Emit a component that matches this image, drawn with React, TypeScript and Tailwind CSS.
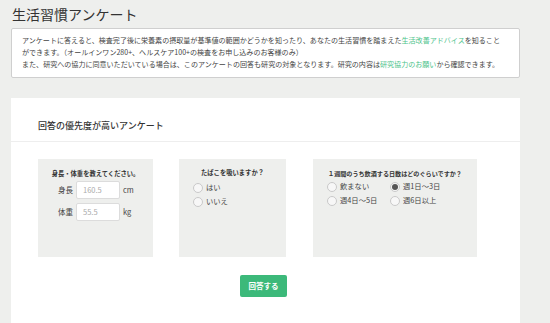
import React from "react";

function Radio({ label, checked }: { label: string; checked?: boolean }) {
  return (
    <div className="flex items-center h-[14px]">
      <span className="w-[10px] h-[10px] rounded-full border border-[#c9c9c9] bg-[#f7f7f7] flex items-center justify-center shrink-0">
        {checked && <span className="w-[6px] h-[6px] rounded-full bg-[#555]" />}
      </span>
      <span className="ml-[3px] text-[7.3px] text-[#444] leading-none">{label}</span>
    </div>
  );
}

export default function App() {
  return (
    <div
      className="w-[550px] h-[323px] bg-[#eeefed] overflow-hidden flex flex-col text-[#333]"
      style={{ fontFamily: '"Noto Sans CJK JP", "Noto Sans", sans-serif' }}
    >
      <div className="pl-[12px] pt-[4px] h-[28px] text-[14px] leading-[20px] text-[#333]">生活習慣アンケート</div>
      <div className="ml-[11px] w-[509px] h-[50px] bg-white border border-[#cfcfcf] rounded-[2px] px-[10px] pt-[5px] text-[7.05px] leading-[12px] text-[#444] whitespace-nowrap">
        <div>
          アンケートに答えると、検査完了後に栄養素の摂取量が基準値の範囲かどうかを知ったり、あなたの生活習慣を踏まえた
          <span className="text-[#4cc38a]">生活改善アドバイス</span>を知ること
        </div>
        <div>ができます。（オールインワン280+、ヘルスケア100+の検査をお申し込みのお客様のみ）</div>
        <div>
          また、研究への協力に同意いただいている場合は、このアンケートの回答も研究の対象となります。研究の内容は
          <span className="text-[#4cc38a]">研究協力のお願い</span>から確認できます。
        </div>
      </div>
      <div className="ml-[11px] mt-[20px] w-[509px] flex-1 bg-white">
        <div className="h-[44px] border-b border-[#eeeeee] pl-[27px] pt-[23px] text-[9px] leading-[10px] font-medium text-[#333]">
          回答の優先度が高いアンケート
        </div>
        <div className="flex pl-[27px] mt-[17px]">
          <div className="w-[115px] h-[98px] bg-[#eeefed] pt-[11px]">
            <div className="text-center text-[6.3px] leading-[8px] font-bold">身長・体重を教えてください。</div>
            <div className="mt-[3px] pl-[20px] flex flex-col gap-[4px]">
              <div className="flex items-center">
                <span className="w-[17px] text-[7.5px] text-[#444]">身長</span>
                <div className="ml-[1px] w-[44px] h-[18px] bg-white border border-[#dcdcdc] rounded-[2px] flex items-center pl-[6px] text-[7.5px] text-[#aaa]">160.5</div>
                <span className="ml-[3px] text-[7.5px] text-[#444]">cm</span>
              </div>
              <div className="flex items-center">
                <span className="w-[17px] text-[7.5px] text-[#444]">体重</span>
                <div className="ml-[1px] w-[44px] h-[18px] bg-white border border-[#dcdcdc] rounded-[2px] flex items-center pl-[6px] text-[7.5px] text-[#aaa]">55.5</div>
                <span className="ml-[3px] text-[7.5px] text-[#444]">kg</span>
              </div>
            </div>
          </div>
          <div className="ml-[26px] w-[107px] h-[98px] bg-[#eeefed] pt-[10px]">
            <div className="text-center text-[6.3px] leading-[8px] font-bold">たばこを吸いますか？</div>
            <div className="pl-[14px] mt-[4px]">
              <Radio label="はい" />
              <Radio label="いいえ" />
            </div>
          </div>
          <div className="ml-[27px] w-[164px] h-[98px] bg-[#eeefed] pt-[11px]">
            <div className="text-center text-[6.1px] leading-[8px] font-bold">１週間のうち飲酒する日数はどのぐらいですか？</div>
            <div className="pl-[14px] mt-[2px] grid grid-cols-[63px_80px]">
              <Radio label="飲まない" />
              <Radio label="週1日〜3日" checked />
              <Radio label="週4日〜5日" />
              <Radio label="週6日以上" />
            </div>
          </div>
        </div>
        <div className="mt-[18px] ml-[229px] w-[47px] h-[22px] bg-[#3cb97a] rounded-[2px] flex items-center justify-center text-white text-[7.5px] font-bold">
          回答する
        </div>
      </div>
    </div>
  );
}
